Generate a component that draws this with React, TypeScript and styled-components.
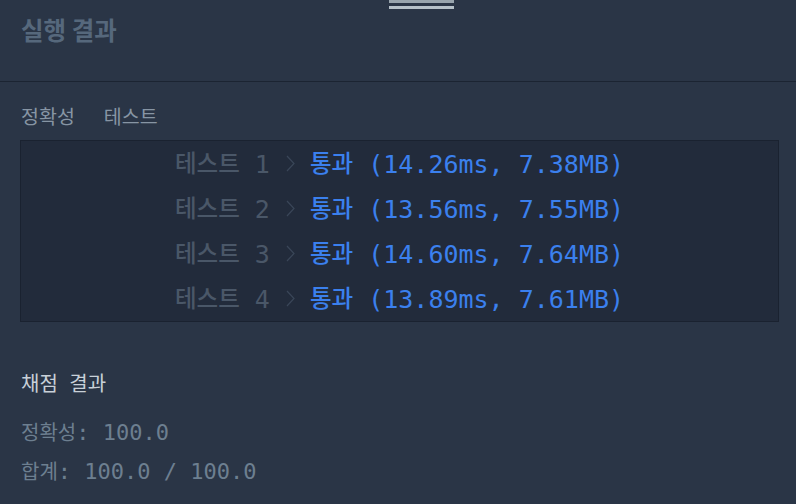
import React from 'react';
import styled, { createGlobalStyle } from 'styled-components';

const GlobalStyle = createGlobalStyle`
  html, body { margin: 0; padding: 0; background: #2a3546; }
  body { font-family: "Noto Sans CJK KR", "Noto Sans", sans-serif; }
`;

const Page = styled.div`
  width: 796px; height: 504px; background: #2a3546; overflow: hidden;
  display: flex; flex-direction: column;
`;

// --- Cabeçalho ---
const Header = styled.header`
  position: relative; height: 81px; border-bottom: 1px solid #1b2432;
  box-sizing: content-box; padding: 0 21px;
`;
const Grip = styled.div`
  position: absolute; top: 0; left: 389px; width: 65px; height: 9px;
  border-top: 3px solid #98a4ad; border-bottom: 3px solid #b6c1c9; box-sizing: border-box;
`;
const Title = styled.h1`
  margin: 0; padding-top: 13px; font-size: 24.5px; font-weight: 700; line-height: 34px;
  color: #56687c;
`;

// --- Corpo ---
const Body = styled.main` padding: 0 17px 0 20px; display: flex; flex-direction: column; `;
const Tabs = styled.div`
  display: flex; gap: 29px; height: 58px; align-items: center; padding: 10px 0 0 1px; box-sizing: border-box;
`;
const Tab = styled.span` font-size: 19.5px; color: #8795a4; line-height: 1; `;

const ResultBox = styled.div`
  border: 1px solid #1a2230; background: #222b3b; display: flex; flex-direction: column;
`;
const Row = styled.div`
  height: 45px; display: flex; justify-content: center; align-items: baseline;
  font-family: "DejaVu Sans Mono", "Noto Sans CJK KR", monospace; font-size: 25px; line-height: 45px;
  white-space: pre;
`;
const Hangul = styled.span`
  font-family: "Noto Sans CJK KR", sans-serif; font-size: 23.5px; font-weight: 500;
  position: relative; top: -1px;
`;
const Label = styled.span` color: #4a5768; `;
const Pass = styled.span` color: #3b80ee; `;
const Chevron = styled.svg`
  width: 9px; height: 17px; margin: 0 15px 0 16px; align-self: center;
`;

const Score = styled.section` display: flex; flex-direction: column; padding: 42px 1px 0; `;
const ScoreTitle = styled.div`
  font-size: 20px; color: #c8d0d8; height: 48px; line-height: 38px; word-spacing: 7px;
`;
const ScoreLine = styled.div`
  font-family: "DejaVu Sans Mono", monospace; font-size: 22px; color: #6d7f90;
  height: 39px; line-height: 39px; white-space: pre;
  & > span { font-family: "Noto Sans CJK KR", sans-serif; font-size: 20px; }
`;

const tests = [
  { n: 1, ms: '14.26', mb: '7.38' },
  { n: 2, ms: '13.56', mb: '7.55' },
  { n: 3, ms: '14.60', mb: '7.64' },
  { n: 4, ms: '13.89', mb: '7.61' },
];

const App: React.FC = () => (
  <>
    <GlobalStyle />
    <Page>
      <Header>
        <Grip />
        <Title>실행 결과</Title>
      </Header>
      <Body>
        <Tabs>
          <Tab>정확성</Tab>
          <Tab>테스트</Tab>
        </Tabs>
        <ResultBox>
          {tests.map(t => (
            <Row key={t.n}>
              <Label><Hangul>테스트</Hangul>{` ${t.n}`}</Label>
              <Chevron viewBox="0 0 9 17">
                <polyline points="1,1 8,8.5 1,16" fill="none" stroke="#3a4658" strokeWidth="1.2" />
              </Chevron>
              <Pass><Hangul>통과</Hangul>{` (${t.ms}ms, ${t.mb}MB)`}</Pass>
            </Row>
          ))}
        </ResultBox>
        <Score>
          <ScoreTitle>채점 결과</ScoreTitle>
          <ScoreLine><span>정확성</span>: 100.0</ScoreLine>
          <ScoreLine><span>합계</span>: 100.0 / 100.0</ScoreLine>
        </Score>
      </Body>
    </Page>
  </>
);

export default App;
